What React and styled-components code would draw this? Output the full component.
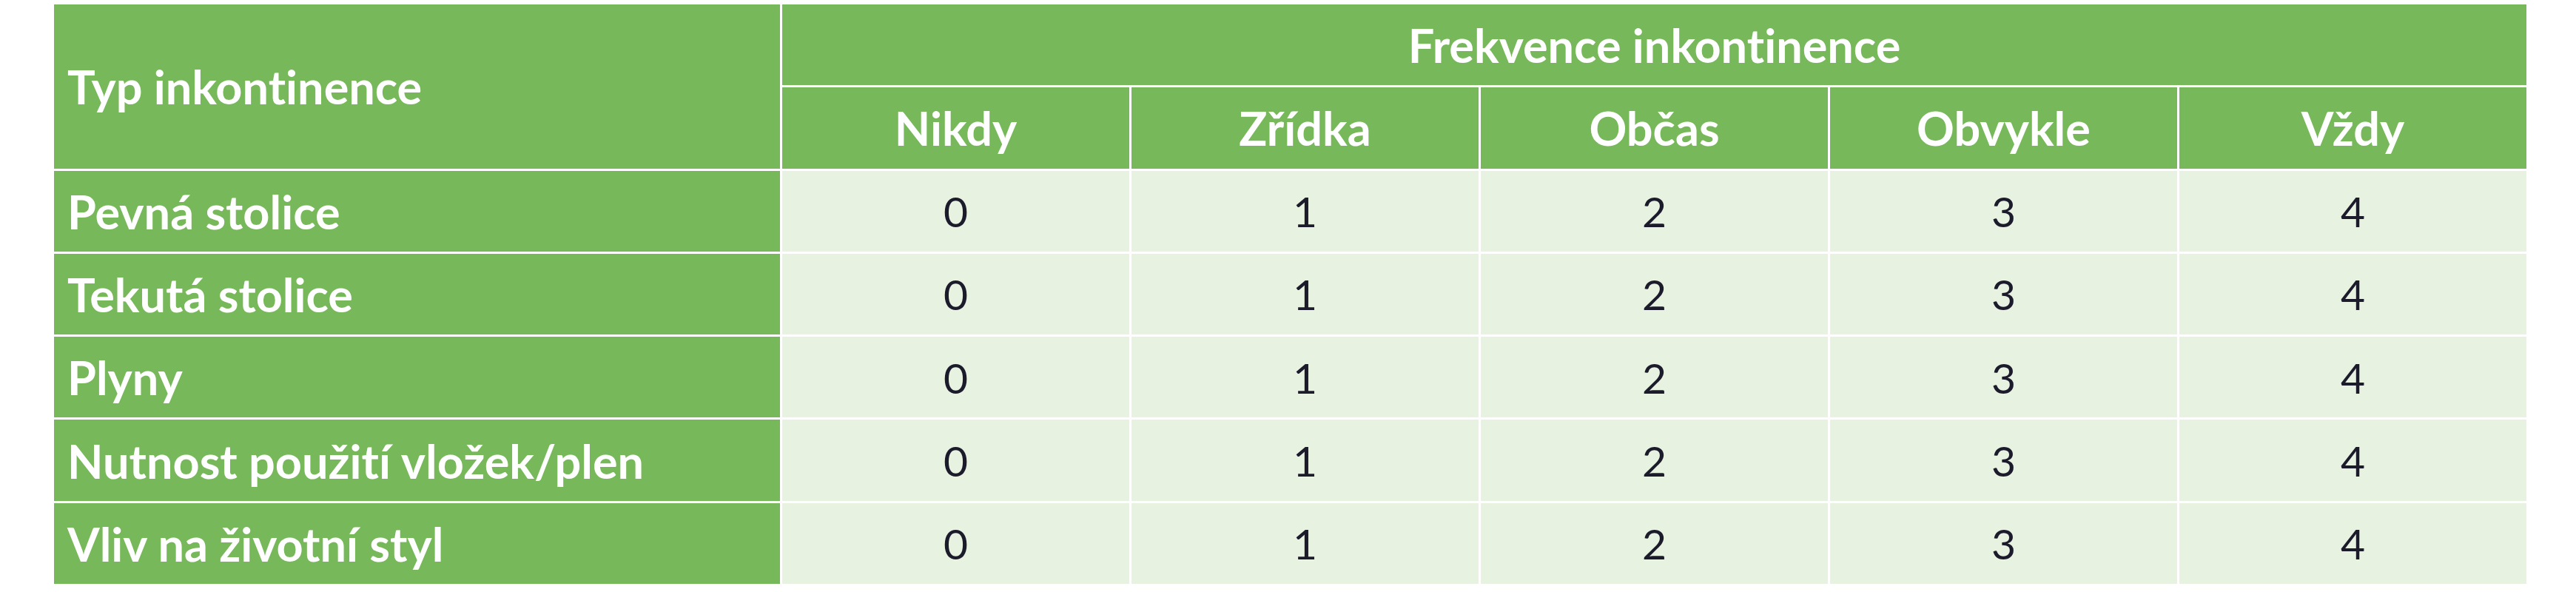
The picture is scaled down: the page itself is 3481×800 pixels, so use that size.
import styled, { createGlobalStyle } from "styled-components";

const Global = createGlobalStyle`
  body {
    margin: 0;
    background: #fff;
  }
`;

const Page = styled.div`
  padding: 6px 0 0 73px;
`;

const Grid = styled.div`
  display: grid;
  grid-template-columns: 981px repeat(5, 1fr);
  grid-template-rows: repeat(7, 1fr);
  gap: 3px;
  width: 3341px;
  height: 783px;
  background: #fff;
  font-family: Lato, "Liberation Sans", sans-serif;
  font-variant-ligatures: none;
`;

const Cell = styled.div`
  display: flex;
  align-items: center;
  justify-content: ${(p) => (p.$left ? "flex-start" : "center")};
  padding-left: ${(p) => (p.$left ? "18px" : "0")};
  grid-column: ${(p) => (p.$cols ? `span ${p.$cols}` : "auto")};
  grid-row: ${(p) => (p.$rows ? `span ${p.$rows}` : "auto")};
  background: ${(p) => (p.$head ? "#77b85a" : "#e8f2e1")};
  color: ${(p) => (p.$head ? "#fff" : "#1b1b2b")};
  font-size: ${(p) => (p.$head ? "63px" : "57px")};
  font-weight: ${(p) => (p.$head ? 700 : 400)};
  white-space: nowrap;
`;

const levels = ["Nikdy", "Zřídka", "Občas", "Obvykle", "Vždy"];
const types = [
  "Pevná stolice",
  "Tekutá stolice",
  "Plyny",
  "Nutnost použití vložek/plen",
  "Vliv na životní styl",
];

export default function App() {
  return (
    <Page>
      <Global />
      <Grid>
        <Cell $head $left $rows={2}>Typ inkontinence</Cell>
        <Cell $head $cols={5}>Frekvence inkontinence</Cell>
        {levels.map((l) => (
          <Cell $head key={l}>{l}</Cell>
        ))}
        {types.map((t) => [
          <Cell $head $left key={t}>{t}</Cell>,
          ...levels.map((l, i) => <Cell key={t + l}>{i}</Cell>),
        ])}
      </Grid>
    </Page>
  );
}
